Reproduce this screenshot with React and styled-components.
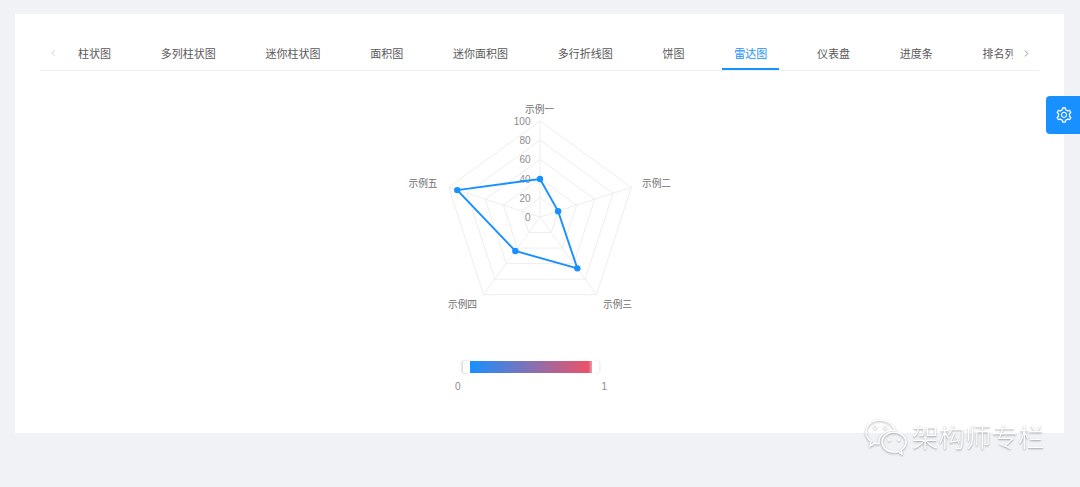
import React from "react";
import styled, { createGlobalStyle } from "styled-components";
import { AiOutlineSetting } from "react-icons/ai";
import { LuChevronLeft, LuChevronRight } from "react-icons/lu";

const Global = createGlobalStyle`
  html, body { margin: 0; padding: 0; background: #f0f2f5; }
  body { font-family: "Noto Sans CJK SC", "Liberation Sans", sans-serif; overflow: hidden; }
`;
const Page = styled.div`
  position: relative;
  width: 1080px;
  height: 487px;
  padding: 14px 16px 0 15px;
  box-sizing: border-box;
  overflow: hidden;
  filter: blur(0.3px);
`;
const Card = styled.main`
  height: 419px;
  background: #fff;
  padding: 22px 25px 0;
  box-sizing: border-box;
`;
const TabBar = styled.div`
  display: flex;
  align-items: stretch;
  height: 35px;
  border-bottom: 1px solid #eeeff1;
  box-sizing: border-box;
`;
const Arrow = styled.div`
  width: 26px;
  flex: none;
  display: flex;
  align-items: center;
  justify-content: center;
  color: ${(p) => (p.$off ? "#c8c8c8" : "#8c8c8c")};
`;
const TabScroll = styled.div`
  flex: 1;
  display: flex;
  gap: 25.75px;
  overflow: hidden;
`;
const Tab = styled.div`
  flex: none;
  padding: 0 12px;
  height: 34px;
  box-sizing: border-box;
  font-size: 11px;
  line-height: 34px;
  color: ${(p) => (p.$active ? "#1890ff" : "#595959")};
  border-bottom: 2px solid ${(p) => (p.$active ? "#1890ff" : "transparent")};
`;
const Chart = styled.svg`
  display: block;
  margin: 24px auto 0;
`;
const Legend = styled.div`
  width: 152px;
  margin: 41px 0 0 415px;
`;
const Track = styled.div`
  display: flex;
  justify-content: center;
  height: 12px;
`;
const Handle = styled.div`
  width: 7px;
  background: #fff;
  border-radius: 2px;
  box-shadow: ${(p) => (p.$left ? "-1px 0 3px rgba(0,0,0,.22)" : "1px 0 3px rgba(0,0,0,.1)")};
`;
const Ramp = styled.div`
  width: 122px;
  background: linear-gradient(90deg, #1890ff 0%, #ec5269 97%, #e9a3ae 100%);
`;
const Scale = styled.div`
  display: flex;
  justify-content: space-between;
  margin-top: 7px;
  font-size: 10px;
  line-height: 13px;
  color: #8c8c8c;
  font-family: "Liberation Sans", sans-serif;
`;
const SettingButton = styled.button`
  position: absolute;
  top: 96px;
  right: 0;
  width: 34px;
  height: 38px;
  border: 0;
  padding: 0 0 0 2px;
  background: #1890ff;
  color: #fff;
  border-radius: 4px 0 0 4px;
  display: flex;
  align-items: center;
  justify-content: center;
  font-size: 18px;
`;
const Watermark = styled.div`
  position: absolute;
  left: 864px;
  top: 417px;
  display: flex;
  align-items: center;
  gap: 2px;
  color: #fff;
  font-size: 26.5px;
  font-weight: 300;
  line-height: 38px;
  text-shadow: 0 1px 2px rgba(0, 0, 0, 0.4);
`;
const WeChat = styled.svg`
  display: block;
  filter: drop-shadow(0 1px 1px rgba(0, 0, 0, 0.35));
`;

const tabs = ["柱状图", "多列柱状图", "迷你柱状图", "面积图", "迷你面积图", "多行折线图", "饼图", "雷达图", "仪表盘", "进度条", "排名列表"];

const C = { x: 140, y: 122 };
const R = 96;
const vertex = (i, r) => {
  const a = (i * 72 * Math.PI) / 180;
  return [C.x + r * Math.sin(a), C.y - r * Math.cos(a)];
};
const ring = (r) => [0, 1, 2, 3, 4].map((i) => vertex(i, r).join(",")).join(" ");
const data = [38, 19, 63.5, 42, 87];
const points = data.map((r, i) => vertex(i, r));
const ticks = [0, 20, 40, 60, 80, 100];
const axisLabels = [
  { t: "示例一", x: 139.5, y: 18, a: "middle" },
  { t: "示例二", x: 242, y: 92, a: "start" },
  { t: "示例三", x: 203, y: 212.5, a: "start" },
  { t: "示例四", x: 48, y: 212.5, a: "start" },
  { t: "示例五", x: 8.5, y: 92, a: "start" },
];

export default function App() {
  return (
    <Page>
      <Global />
      <Card>
        <TabBar>
          <Arrow $off><LuChevronLeft size={10} /></Arrow>
          <TabScroll>
            {tabs.map((t) => (
              <Tab key={t} $active={t === "雷达图"}>{t}</Tab>
            ))}
          </TabScroll>
          <Arrow><LuChevronRight size={11} /></Arrow>
        </TabBar>
        <Chart width="280" height="225" viewBox="0 0 280 225">
          <g fill="none" stroke="#eeeeee" strokeWidth="1">
            {[1, 2, 3, 4, 5].map((k) => (
              <polygon key={k} points={ring((R * k) / 5)} />
            ))}
            {[0, 1, 2, 3, 4].map((i) => {
              const [x, y] = vertex(i, R);
              return <line key={i} x1={C.x} y1={C.y} x2={x} y2={y} />;
            })}
          </g>
          <g fontSize="10" fill="#8c8c8c" fontFamily="'Liberation Sans', sans-serif" textAnchor="end">
            {ticks.map((v, i) => (
              <text key={v} x={C.x - 9.5} y={C.y - (R * i) / 5 + 4}>{v}</text>
            ))}
          </g>
          <g fontSize="9.7" fill="#6e6e6e" fontFamily="'Noto Sans CJK SC', sans-serif">
            {axisLabels.map((l) => (
              <text key={l.t} x={l.x} y={l.y} textAnchor={l.a}>{l.t}</text>
            ))}
          </g>
          <polygon points={points.map((p) => p.join(",")).join(" ")} fill="none" stroke="#1890ff" strokeWidth="1.9" />
          {points.map(([x, y], i) => (
            <circle key={i} cx={x} cy={y} r="3.2" fill="#1890ff" />
          ))}
        </Chart>
        <Legend>
          <Track>
            <Handle $left />
            <Ramp />
            <Handle />
          </Track>
          <Scale><span>0</span><span>1</span></Scale>
        </Legend>
      </Card>
      <SettingButton aria-label="设置"><AiOutlineSetting /></SettingButton>
      <Watermark>
        <WeChat width="46" height="38" viewBox="0 0 46 38">
          <path d="M16 3C8 3 2 8 2 15c0 4 2 7 5 9l-1 5 5-3c1 .4 2 .5 4 .6C14 20 20 13 31 13 29 7 23 3 16 3z" fill="none" stroke="#fff" strokeWidth="1.4" />
          <path d="M30 15c-7 0-12 5-12 10s5 10 12 10c2 0 3-.3 4-.6l4 2.6-1-4c3-2 5-5 5-8 0-5-5-10-12-10z" fill="none" stroke="#fff" strokeWidth="1.4" />
          <circle cx="11" cy="10" r="1.6" fill="none" stroke="#fff" />
          <circle cx="21" cy="10" r="1.6" fill="none" stroke="#fff" />
          <circle cx="25" cy="23" r="1.2" fill="#fff" />
          <circle cx="35" cy="23" r="1.2" fill="#fff" />
        </WeChat>
        架构师专栏
      </Watermark>
    </Page>
  );
}
